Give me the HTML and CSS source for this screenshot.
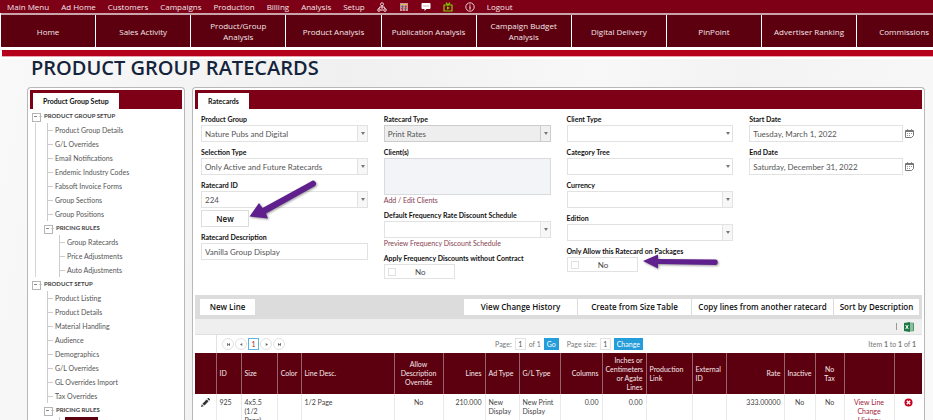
FILE: index.html
```html
<!DOCTYPE html>
<html lang="en">
<head>
<meta charset="utf-8">
<title>Product Group Ratecards</title>
<link rel="stylesheet" href="styles.css">
</head>
<body>
<nav class="menu" aria-label="Main">
  <a href="#">Main Menu</a><a href="#">Ad Home</a><a href="#">Customers</a><a href="#">Campaigns</a><a href="#">Production</a><a href="#">Billing</a><a href="#">Analysis</a><a href="#">Setup</a>
  <a href="#" aria-label="Organisation"><svg viewBox="0 0 10 10"><g fill="none" stroke="#ecd9dc"><circle cx="5" cy="2.3" r="1.5"/><path d="M5 4v3M2.500 5h5M3 5 1.500 7M7 5l1.500 2"/><circle cx="2" cy="8" r="1.300"/><circle cx="8" cy="8" r="1.300"/><path d="M4 8h2"/></g></svg></a>
  <a href="#" aria-label="Calculator"><svg viewBox="0 0 10 10"><path fill="#c98f9b" d="M1 1h8v8H1z"/><path fill="#d8c24a" d="M2 2h6v1H2z"/><path fill="#3d8fd0" d="M2 4h1v1H2zM5 6h1v1H5z"/><path fill="#59a84b" d="M4 4h1v1H4zM7 6h1v1H7z"/><path fill="#c33" d="M7 4h1v1H7zM2 6h1v1H2z"/><path fill="#7d0016" d="M3 3.500h.5V9H3zM6 3.500h.5V9H6z"/></svg></a>
  <a href="#" aria-label="Messages"><svg viewBox="0 0 10 10"><path fill="#fff" d="M1.500 1h7a1 1 0 0 1 1 1v4a1 1 0 0 1-1 1H5.500L3.500 9V7h-2a1 1 0 0 1-1-1V2a1 1 0 0 1 1-1z"/><path stroke="#a8606e" stroke-dasharray="1 1" d="M2.500 4h5"/></svg></a>
  <a href="#" aria-label="Videos"><svg viewBox="0 0 10 10"><g fill="none" stroke="#7fd000" stroke-width="1.200"><path d="M1 3h8v6H1zM3 .6 5 3l2-2.400"/></g><path fill="#7fd000" d="M4 4.300 6.800 6 4 7.700z"/></svg></a>
  <a href="#" aria-label="Information"><svg viewBox="0 0 10 10"><circle cx="5" cy="5" r="4.200" fill="none" stroke="#f3e6e8" stroke-width=".9"/><path stroke="#f3e6e8" stroke-width="1.200" d="M5 4.300v3.200M5 2.400v1.100"/></svg></a>
  <a href="#">Logout</a>
</nav>
<nav class="tiles" aria-label="Reports">
  <a href="#">Home</a><a href="#">Sales Activity</a><a href="#">Product/Group Analysis</a><a href="#">Product Analysis</a><a href="#">Publication Analysis</a><a href="#">Campaign Budget Analysis</a><a href="#">Digital Delivery</a><a href="#">PinPoint</a><a href="#">Advertiser Ranking</a><a href="#">Commissions</a>
</nav>
<div class="stripe"></div>
<main class="page">
  <h1>PRODUCT GROUP RATECARDS</h1>
  <div class="panels">
    <aside class="panel side">
      <div class="tabs"><a class="tab" href="#">Product Group Setup</a></div>
      <ul class="tree">
        <li class="branch"><span class="node">PRODUCT GROUP SETUP</span>
          <ul>
            <li><a href="#">Product Group Details</a></li>
            <li><a href="#">G/L Overrides</a></li>
            <li><a href="#">Email Notifications</a></li>
            <li><a href="#">Endemic Industry Codes</a></li>
            <li><a href="#">Fabsoft Invoice Forms</a></li>
            <li><a href="#">Group Sections</a></li>
            <li><a href="#">Group Positions</a></li>
            <li class="branch"><span class="node">PRICING RULES</span>
              <ul>
                <li><a href="#">Group Ratecards</a></li>
                <li><a href="#">Price Adjustments</a></li>
                <li><a href="#">Auto Adjustments</a></li>
              </ul>
            </li>
          </ul>
        </li>
        <li class="branch"><span class="node">PRODUCT SETUP</span>
          <ul>
            <li><a href="#">Product Listing</a></li>
            <li><a href="#">Product Details</a></li>
            <li><a href="#">Material Handling</a></li>
            <li><a href="#">Audience</a></li>
            <li><a href="#">Demographics</a></li>
            <li><a href="#">G/L Overrides</a></li>
            <li><a href="#">GL Overrides Import</a></li>
            <li><a href="#">Tax Overrides</a></li>
            <li class="branch"><span class="node">PRICING RULES</span>
              <ul>
                <li><a class="current" href="#" aria-label="Ratecards"></a></li>
              </ul>
            </li>
          </ul>
        </li>
      </ul>
    </aside>

    <section class="panel content">
      <div class="tabs"><a class="tab" href="#">Ratecards</a></div>
      <form class="form">
        <div class="col">
          <div class="field"><label for="group">Product Group</label><div class="drop split"><select id="group"><option>Nature Pubs and Digital</option></select></div></div>
          <div class="field"><label for="seltype">Selection Type</label><div class="drop split"><select id="seltype"><option>Only Active and Future Ratecards</option></select></div></div>
          <div class="field"><label for="rcid">Ratecard ID</label><div class="drop split"><select id="rcid"><option>224</option></select></div>
            <div class="holder"><button type="button" class="new">New</button>
              <svg class="arrow arrow-new" viewBox="0 0 72 42"><path d="M1.500 36.500 11 23l3.500 5L63 1.500a3 3 0 0 1 4 4.500L18 33.500l2 5z"/></svg>
            </div>
          </div>
          <div class="field"><label for="desc">Ratecard Description</label><input id="desc" type="text" value="Vanilla Group Display"></div>
        </div>
        <div class="col">
          <div class="field"><label for="rctype">Ratecard Type</label><div class="drop split locked"><select id="rctype"><option>Print Rates</option></select></div></div>
          <div class="field"><label for="clients">Client(s)</label><textarea id="clients"></textarea><a class="hint" href="#">Add / Edit Clients</a></div>
          <div class="field"><label for="freq">Default Frequency Rate Discount Schedule</label><div class="drop split"><select id="freq"><option></option></select></div><a class="hint" href="#">Preview Frequency Discount Schedule</a></div>
          <div class="field"><label for="apply">Apply Frequency Discounts without Contract</label><div class="toggle"><input id="apply" type="checkbox"><span>No</span></div></div>
        </div>
        <div class="col">
          <div class="field"><label for="ctype">Client Type</label><div class="drop"><select id="ctype"><option></option></select></div></div>
          <div class="field"><label for="cat">Category Tree</label><div class="drop"><select id="cat"><option></option></select></div></div>
          <div class="field"><label for="cur">Currency</label><div class="drop split"><select id="cur"><option></option></select></div></div>
          <div class="field"><label for="edition">Edition</label><div class="drop split"><select id="edition"><option></option></select></div></div>
          <div class="field"><label for="only">Only Allow this Ratecard on Packages</label>
            <div class="holder"><div class="toggle"><input id="only" type="checkbox"><span>No</span></div>
              <svg class="arrow arrow-only" viewBox="0 0 80 18"><path d="M1 8 16 1.500V6l58 .5a3 3 0 0 1 0 5.500L16 11v4.500z"/></svg>
            </div>
          </div>
        </div>
        <div class="col">
          <div class="field"><label for="start">Start Date</label><div class="date"><input id="start" type="text" value="Tuesday, March 1, 2022"><button type="button" aria-label="Pick start date"><svg viewBox="0 0 9 9"><path fill="#fff" stroke="#777" d="M.5 1.500h8v5l-2 2h-6z"/><path stroke="#777" d="M1 2.500h7"/><path stroke="#999" stroke-dasharray="1 1" d="M2 4.500h5M2 6.500h4M2.500 0v1M6.500 0v1"/></svg></button></div></div>
          <div class="field"><label for="end">End Date</label><div class="date"><input id="end" type="text" value="Saturday, December 31, 2022"><button type="button" aria-label="Pick end date"><svg viewBox="0 0 9 9"><path fill="#fff" stroke="#777" d="M.5 1.500h8v5l-2 2h-6z"/><path stroke="#777" d="M1 2.500h7"/><path stroke="#999" stroke-dasharray="1 1" d="M2 4.500h5M2 6.500h4M2.500 0v1M6.500 0v1"/></svg></button></div></div>
        </div>
      </form>

      <div class="actions">
        <button type="button" class="line">New Line</button>
        <div class="group">
          <button type="button" class="history">View Change History</button><button type="button" class="create">Create from Size Table</button><button type="button" class="copy">Copy lines from another ratecard</button><button type="button" class="sort">Sort by Description</button>
        </div>
      </div>
      <div class="export"><span class="bar"></span><button type="button" aria-label="Export to Excel"><svg viewBox="0 0 10 10"><path fill="#fff" stroke="#1d7a45" stroke-width=".8" d="M5 1.200h4.500v7.600H5z"/><path stroke="#1d7a45" d="M6 3h3M6 5h3M6 7h3"/><path fill="#1d7a45" d="M0 1 6 0v10L0 9z"/><path stroke="#fff" d="m1.700 3 2.600 4M4.300 3 1.700 7"/></svg></button></div>
      <div class="pager">
        <div class="steps">
          <button type="button" class="step" aria-label="First page"><svg viewBox="0 0 4 4"><path d="M0 0h1v4H0zM4 0v4L1 2z"/></svg></button>
          <button type="button" class="step" aria-label="Previous page"><svg viewBox="0 0 4 4"><path d="M3 0v4L0 2z"/></svg></button>
          <button type="button" class="now">1</button>
          <button type="button" class="step" aria-label="Next page"><svg viewBox="0 0 4 4"><path d="M1 0v4l3-2z"/></svg></button>
          <button type="button" class="step" aria-label="Last page"><svg viewBox="0 0 4 4"><path d="M3 0h1v4H3zM0 0v4l3-2z"/></svg></button>
        </div>
        <div class="goto">
          <label for="pageno">Page:</label><input id="pageno" type="text" value="1"><span>of 1</span><button type="button" class="go">Go</button>
          <label class="size" for="pagesize">Page size:</label><input id="pagesize" type="text" value="1"><button type="button" class="go">Change</button>
        </div>
        <div class="count">Item <b>1</b> to <b>1</b> of <b>1</b></div>
      </div>
      <table class="lines">
        <colgroup><col class="w21"><col class="w25"><col class="w36"><col class="w24"><col><col class="w49"><col class="w42"><col class="w34"><col class="w41"><col class="w42"><col class="w44"><col class="w46"><col class="w34"><col class="w58"><col class="w31"><col class="w29"><col class="w50"><col class="w28"></colgroup>
        <thead><tr><th></th><th>ID</th><th>Size</th><th class="mid">Color</th><th>Line Desc.</th><th class="mid">Allow Description Override</th><th class="num">Lines</th><th>Ad Type</th><th>G/L Type</th><th class="num">Columns</th><th class="num">Inches or Centimeters or Agate Lines</th><th>Production Link</th><th>External ID</th><th class="num">Rate</th><th class="mid">Inactive</th><th class="mid">No<br>Tax</th><th></th><th></th></tr></thead>
        <tbody><tr>
          <td class="mid"><button type="button" aria-label="Edit line"><svg viewBox="0 0 9 9"><path fill="#333" d="M0 9 .8 6.300 2.700 8.200zM1.400 5.700 5.700 1.400l1.900 1.900L3.300 7.600zM6.300.8 7 .1q.4-.2.800 0L8.900 1.200q.2.400 0 .8l-.7.7z"/></svg></button></td>
          <td>925</td><td>4x5.5<br>(1/2<br>Page)</td><td></td><td>1/2 Page</td><td class="mid">No</td><td class="num">210.000</td><td>New Display</td><td>New Print Display</td><td class="num">0.00</td><td class="num">0.00</td><td></td><td></td><td class="num">333.00000</td><td class="mid">No</td><td class="mid">No</td><td class="mid"><a href="#">View Line<br>Change<br>History</a></td>
          <td class="mid"><button type="button" aria-label="Delete line"><svg viewBox="0 0 9 9"><circle cx="4.500" cy="4.500" r="4" fill="#c4001c"/><path stroke="#fff" stroke-width="1.500" d="m2.800 2.800 3.400 3.400M6.200 2.800 2.800 6.200"/></svg></button></td>
        </tr></tbody>
      </table>
    </section>
  </div>
</main>
</body>
</html>
```
FILE: styles.css
```css
* { box-sizing: border-box; }
body {
  margin: 0;
  height: 100vh;
  overflow: hidden;
  display: flex;
  flex-direction: column;
  font: 7px/10px Lato, "Open Sans", sans-serif;
  color: #444;
  background: #fff;
}
a { color: inherit; text-decoration: none; }
button, input, select, textarea { font: inherit; color: inherit; margin: 0; padding: 0; border: 0; border-radius: 0; background: none; }
svg { display: block; }

/* top navigation */
.menu { display: flex; align-items: center; gap: 12px; height: 13px; padding: 0 7px; background: #7d0016; color: #f3e6e8; font: 8px/12px "Open Sans", sans-serif; }
.menu svg { width: 10px; height: 10px; }
.tiles { display: flex; gap: 1px; margin-left: 1px; padding: 2px 0; overflow: hidden; background: linear-gradient(#c9a3a9 0 2px, #fff 2px); }
.tiles a { flex: 0 0 10.1%; height: 32px; padding: 0 10px; display: flex; align-items: center; justify-content: center; text-align: center; background: #5c000f; color: #f3e6e8; font: 8px/11px "Open Sans", sans-serif; }
.stripe { height: 7px; margin: 1px 0 2px 2px; background: #b4001b; border-bottom: 1px solid #eaa5ae; flex: none; }

/* page and panels */
.page { flex: 1; min-height: 0; display: flex; flex-direction: column; padding: 0 8px 0 27px; background: linear-gradient(100deg, #f9f9f9, #f0f0f0 35%, #f8f8f8 60%, #f3f3f3 75%, #f9f9f9); }
h1 { margin: 0; padding: 0 4px 10px; font: 600 20px/18px "Open Sans", sans-serif; color: #14243a; }
.panels { flex: 1; min-height: 0; display: flex; gap: 7px; }
.panel { border: 1px solid #b8b8b8; border-bottom: 0; border-radius: 4px 4px 0 0; padding: 2px 2px 0; background: #fff; overflow: hidden; }
.side { flex: 0 0 158px; }
.content { flex: 1; min-width: 0; }
.tabs { display: flex; height: 19px; padding: 3px 3px 0; background: #7d0016; }
.tab { padding: 0 10px; background: #fff; color: #111; font-weight: 700; line-height: 16px; }

/* tree */
.tree, .tree ul { margin: 0; padding: 0; list-style: none; }
.tree { padding: 0 2px; line-height: 14px; color: #555; }
.tree .node { display: block; padding-left: 12px; font-size: 6px; font-weight: 700; color: #444; background: linear-gradient(#888, #888) 2px 7px / 3px 1px no-repeat, linear-gradient(#ccc, #ccc) 7px 7px / 3px 1px no-repeat; position: relative; }
.tree .node::before { content: ""; position: absolute; left: 0; top: 4px; width: 7px; height: 7px; border: 1px solid #b5b5b5; }
.tree > .branch > ul { border-left: 1px solid #d5d5d5; margin-left: 3px; }
.tree > .branch:last-child > ul { border-color: transparent; }
.tree ul > li { margin-left: 10px; background: linear-gradient(#ccc, #ccc) 1px 7px / 6px 1px no-repeat, linear-gradient(#ccc, #ccc) 1px 0 / 1px 14px no-repeat; }
.tree ul > .branch { margin-left: 8px; background: none; }
.tree ul ul > li { margin-left: 14px; }
.tree ul a { display: block; margin-left: 9px; width: fit-content; }
.tree ul .current { width: 33px; height: 14px; margin-left: 7px; background: #5c000f; }

/* form */
.form { display: grid; grid-template-columns: repeat(4, 1fr); column-gap: 16px; padding: 4px 6px 0; }
.col { display: flex; flex-direction: column; gap: 4px; }
.field { display: flex; flex-direction: column; }
.field > label { color: #111; font-weight: 700; line-height: 12px; }
.field input[type="text"], .drop select { width: 100%; height: 17px; padding: 0 3px; border: 1px solid #e2e2e2; font-size: 8px; color: #555; }
.drop { position: relative; display: flex; }
.drop select { appearance: none; background: #fff; }
.drop.split select { background: linear-gradient(to left, #f7f7f7 9px, #e2e2e2 9px 10px, #fff 10px); }
.drop.locked select { background: linear-gradient(to left, #f0f0f0 9px, #ccc 9px 10px, #eee 10px); border-color: #ccc; }
.drop::after { content: ""; position: absolute; right: 3px; top: 7px; border: 2px solid transparent; border-top: 3px solid #777; border-bottom: 0; pointer-events: none; }
textarea { display: block; height: 37px; resize: none; border: 1px solid #d8dadd; background: #f3f4f7; }
.hint { color: #86404e; line-height: 10px; }
.holder { position: relative; }
.new { width: 48px; height: 17px; margin-top: 2px; display: block; border: 1px solid #ddd; background: #fff; color: #111; font: 600 8px/10px "Open Sans", sans-serif; }
.toggle { display: flex; align-items: center; width: 71px; height: 15px; padding: 0 3px; border: 1px solid #e2e2e2; background: #fff; font-size: 8px; }
.toggle input { appearance: none; width: 8px; height: 8px; border: 1px solid #e0e0e0; }
.toggle span { flex: 1; text-align: center; padding-right: 6px; }
.date { display: flex; align-items: center; gap: 2px; margin-right: 2px; }
.date svg { width: 9px; height: 9px; }
.arrow { position: absolute; fill: #5f1f8c; filter: drop-shadow(1px 1px 1px #0006); overflow: visible; }
.arrow-new { left: 47px; top: -28px; width: 72px; height: 42px; }
.arrow-only { left: 75px; top: -4px; width: 80px; height: 18px; }

/* toolbar and pager */
.actions { display: flex; justify-content: space-between; margin-top: 16px; padding: 4px 3px 4px 5px; background: #dcdcdc; }
.actions button { height: 16px; background: #fff; color: #111; font: 600 8px/10px "Open Sans", sans-serif; }
.group { display: flex; gap: 1px; }
.line { width: 55px; }
.history, .create { width: 113px; }
.copy { width: 141px; }
.sort { width: 85px; }
.export { display: flex; align-items: center; justify-content: flex-end; gap: 7px; height: 16px; padding-right: 8px; background: #efefef; border-bottom: 1px solid #e0e0e0; }
.export svg { width: 10px; height: 10px; }
.bar { width: 1px; height: 7px; background: #999; }
.pager { display: grid; grid-template-columns: 1fr auto 1fr; align-items: center; height: 18px; padding: 0 6px 0 27px; color: #777; background: linear-gradient(#e2e2e2, #e2e2e2) 21px 0 / 1px 100% no-repeat; }
.steps { display: flex; align-items: center; gap: 1px; }
.goto { display: flex; align-items: center; gap: 3px; }
.step { width: 12px; height: 12px; border: 1px solid #e2e2e2; border-radius: 50%; display: grid; place-items: center; }
.step svg { width: 3px; height: 3px; fill: #666; }
.now { width: 11px; height: 12px; border: 1px solid #5bb5e0; color: #a3243a; }
.goto input { width: 11px; height: 12px; border: 1px solid #e2e2e2; text-align: center; color: #555; }
.go { height: 12px; padding: 0 3px; background: #259dda; color: #fff; }
.size { margin-left: 5px; }
.count { text-align: right; }

/* ratecard lines */
.lines { width: 100%; table-layout: fixed; border-collapse: collapse; line-height: 9px; }
.lines th { height: 41px; padding: 0 3px; vertical-align: middle; text-align: left; font-weight: 400; background: #5c000f; color: #f6e9eb; border-right: 1px solid #96636b; }
.lines td { padding: 4px 3px; vertical-align: top; border-right: 1px solid #eaeaea; }
.lines th:last-child, .lines td:last-child { border-right: 0; }
.lines .num { text-align: right; }
.lines .mid { text-align: center; padding-left: 0; padding-right: 0; }
.lines svg { width: 9px; height: 9px; }
.lines td a { color: #a3243a; }
.w21 { width: 21px; } .w24 { width: 24px; } .w25 { width: 25px; } .w28 { width: 28px; } .w29 { width: 29px; }
.w31 { width: 31px; } .w34 { width: 34px; } .w36 { width: 36px; } .w41 { width: 41px; } .w42 { width: 42px; }
.w44 { width: 44px; } .w46 { width: 46px; } .w49 { width: 49px; } .w50 { width: 50px; } .w58 { width: 58px; }
```
